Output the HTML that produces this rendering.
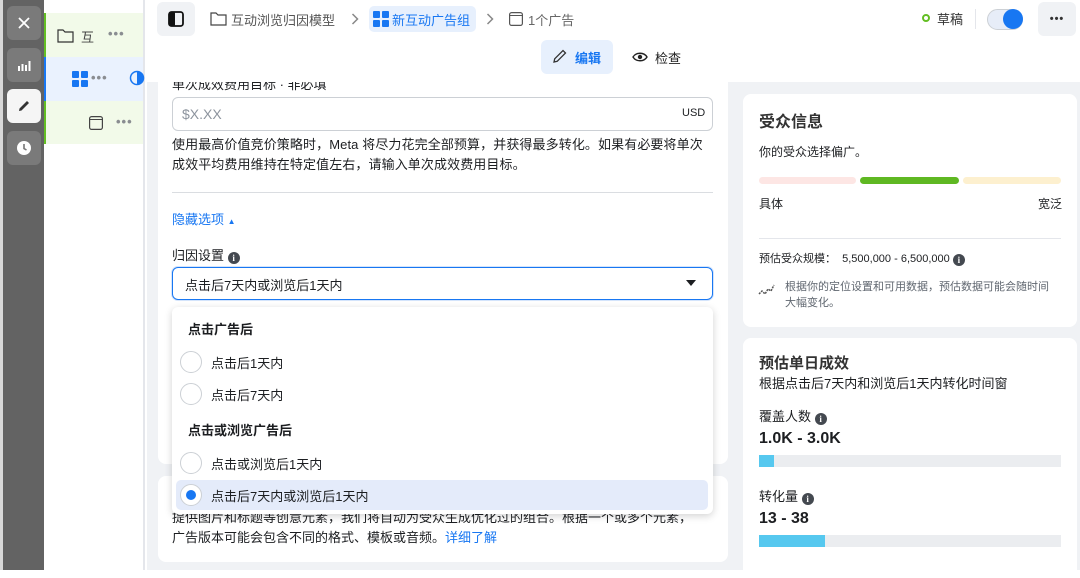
<!DOCTYPE html>
<html><head><meta charset="utf-8"><style>
*{box-sizing:border-box;margin:0;padding:0}
body{width:1080px;height:570px;overflow:hidden;position:relative;background:#fff;font-family:"Liberation Sans","Noto Sans CJK SC",sans-serif;color:#1c1e21;font-size:13px}
.a{position:absolute}
.rail{left:0;top:0;width:44px;height:570px;background:#636363;border-left:3px solid #d8d8d8}
.rb{position:absolute;left:4px;width:34px;height:34px;border-radius:6px;background:#7a7a7a;display:flex;align-items:center;justify-content:center}
.tree{left:44px;top:0;width:101px;height:570px;background:#fff;border-right:2px solid #e4e6eb}
.dots{color:#8a8d91;font-size:13px;letter-spacing:1px;font-weight:bold}
.main{left:147px;top:0;width:933px;height:570px;background:#f0f2f5}
.hdr{left:147px;top:0;width:933px;height:82px;background:#fff}
.card{background:#fff;border-radius:8px}
.radio{position:absolute;left:6px;width:22px;height:22px;border-radius:50%;border:1px solid #ccd0d5;background:#fff}
.info{display:inline-block;width:12px;height:12px;border-radius:50%;background:#444950;color:#fff;font-size:9px;font-weight:bold;text-align:center;line-height:12px;vertical-align:-1px;font-family:"Liberation Serif",serif}
.chev{color:#888;font-size:20px;line-height:20px}
</style></head><body>
<div class="a rail">
 <div class="rb" style="top:6px"><svg width="14" height="14"><path d="M2 2L12 12M12 2L2 12" stroke="#fff" stroke-width="1.8"/></svg></div>
 <div class="rb" style="top:48px"><svg width="16" height="14"><rect x="2" y="8" width="2" height="5" fill="#fff"/><rect x="5.5" y="6" width="2" height="7" fill="#fff"/><rect x="9" y="7" width="2" height="6" fill="#fff"/><rect x="12.5" y="3" width="2" height="10" fill="#fff"/></svg></div>
 <div class="rb" style="top:89px;background:#f5f5f5"><svg width="16" height="16"><path d="M3 13L3.5 10.5L11 3L13 5L5.5 12.5Z" fill="#333"/></svg></div>
 <div class="rb" style="top:131px"><svg width="16" height="16"><circle cx="8" cy="8" r="7" fill="#fff"/><path d="M8 4V8.5L10.5 10" stroke="#777" stroke-width="1.6" fill="none"/></svg></div>
</div>
<div class="a tree">
 <div class="a" style="left:0;top:13px;width:99px;height:44px;background:#f2fae9;border-left:2px solid #63be23"></div>
 <div class="a" style="left:0;top:57px;width:99px;height:44px;background:#eaf2fe;border-left:2px solid #1877f2"></div>
 <div class="a" style="left:0;top:101px;width:99px;height:43px;background:#f2fae9;border-left:2px solid #63be23"></div>
 <svg class="a" style="left:13px;top:28px" width="17" height="15"><path d="M1 2H6L8 4H16V14H1Z" fill="none" stroke="#333" stroke-width="1.2"/></svg>
 <div class="a" style="left:37px;top:27px;color:#444;font-size:13px">互</div>
 <div class="a dots" style="left:64px;top:26px">•••</div>
 <svg class="a" style="left:28px;top:71px" width="16" height="16"><rect x="0" y="0" width="7" height="7" rx="1" fill="#1877f2"/><rect x="9" y="0" width="7" height="7" rx="1" fill="#1877f2"/><rect x="0" y="9" width="7" height="7" rx="1" fill="#1877f2"/><rect x="9" y="9" width="7" height="7" rx="1" fill="#1877f2"/></svg>
 <div class="a dots" style="left:47px;top:70px">•••</div>
 <svg class="a" style="left:85px;top:70px" width="16" height="16"><circle cx="8" cy="8" r="6.5" fill="none" stroke="#1877f2" stroke-width="1.5"/><path d="M8 1.5A6.5 6.5 0 0 1 8 14.5Z" fill="#1877f2"/></svg>
 <svg class="a" style="left:45px;top:116px" width="14" height="14"><rect x="0.6" y="0.6" width="12.8" height="12.8" rx="2" fill="none" stroke="#444" stroke-width="1.2"/><path d="M1 3.5H13" stroke="#444"/></svg>
 <div class="a dots" style="left:72px;top:114px">•••</div>
</div>
<div class="a main"></div>
<div class="a card" style="left:158px;top:60px;width:570px;height:404px"></div>
<div class="a" style="left:172px;top:74px;color:#1c1e21;font-size:13px">单次成效费用目标 · 非必填</div>
<div class="a" style="left:172px;top:97px;width:541px;height:34px;border:1px solid #ccd0d5;border-radius:6px"></div>
<div class="a" style="left:182px;top:106px;color:#8d949e;font-size:14px">$X.XX</div>
<div class="a" style="left:682px;top:107px;color:#1c1e21;font-size:11px">USD</div>
<div class="a" style="left:172px;top:135px;width:545px;line-height:20px;font-size:13px;color:#1c1e21;letter-spacing:0.1px">使用最高价值竞价策略时，Meta 将尽力花完全部预算，并获得最多转化。如果有必要将单次<br>成效平均费用维持在特定值左右，请输入单次成效费用目标。</div>
<div class="a" style="left:172px;top:192px;width:541px;height:1px;background:#dadde1"></div>
<div class="a" style="left:172px;top:209px;color:#1877f2;font-size:13px">隐藏选项 <span style="font-size:8px">▲</span></div>
<div class="a" style="left:172px;top:245px;font-size:13px">归因设置 <span class="info">i</span></div>
<div class="a" style="left:172px;top:267px;width:541px;height:33px;border:1px solid #1877f2;border-radius:6px;box-shadow:0 0 0 1px #d4e4fb"></div>
<div class="a" style="left:185px;top:275px;font-size:13px">点击后7天内或浏览后1天内</div>
<svg class="a" style="left:686px;top:280px" width="10" height="6"><path d="M0 0H10L5 6Z" fill="#1c1e21"/></svg>
<div class="a card" style="left:158px;top:476px;width:570px;height:86px"></div>
<div class="a" style="left:172px;top:508px;width:545px;line-height:20px;font-size:13px;color:#1c1e21">提供图片和标题等创意元素，我们将自动为受众生成优化过的组合。根据一个或多个元素，<br>广告版本可能会包含不同的格式、模板或音频。<span style="color:#1877f2">详细了解</span></div>
<div class="a" style="left:172px;top:307px;width:541px;height:207px;background:#fff;border-radius:6px;box-shadow:0 2px 8px rgba(0,0,0,.18)">
 <div class="a" style="left:16px;top:12px;font-weight:bold;font-size:13px">点击广告后</div>
 <div class="radio" style="top:44px;left:8px"></div><div class="a" style="left:39px;top:46px">点击后1天内</div>
 <div class="radio" style="top:76px;left:8px"></div><div class="a" style="left:39px;top:78px">点击后7天内</div>
 <div class="a" style="left:16px;top:113px;font-weight:bold;font-size:13px">点击或浏览广告后</div>
 <div class="radio" style="top:145px;left:8px"></div><div class="a" style="left:39px;top:147px">点击或浏览后1天内</div>
 <div class="a" style="left:4px;top:173px;width:532px;height:30px;background:#e4ebfa;border-radius:5px"></div>
 <div class="radio" style="top:177px;left:8px"></div><div class="a" style="left:14px;top:183px;width:10px;height:10px;border-radius:50%;background:#1877f2"></div>
 <div class="a" style="left:39px;top:179px">点击后7天内或浏览后1天内</div>
</div>
<div class="a card" style="left:743px;top:94px;width:334px;height:233px"></div>
<div class="a" style="left:759px;top:108px;font-size:16px;font-weight:bold;color:#333">受众信息</div>
<div class="a" style="left:759px;top:143px;font-size:12px">你的受众选择偏广。</div>
<div class="a" style="left:759px;top:177px;width:97px;height:7px;border-radius:4px;background:#fde6e4"></div>
<div class="a" style="left:860px;top:177px;width:99px;height:7px;border-radius:4px;background:#5fb822"></div>
<div class="a" style="left:963px;top:177px;width:98px;height:7px;border-radius:4px;background:#fdf0cf"></div>
<div class="a" style="left:759px;top:195px;font-size:12px">具体</div>
<div class="a" style="left:1038px;top:195px;font-size:12px">宽泛</div>
<div class="a" style="left:759px;top:238px;width:302px;height:1px;background:#e4e6eb"></div>
<div class="a" style="left:759px;top:250px;font-size:11px">预估受众规模：&nbsp; 5,500,000 - 6,500,000 <span class="info">i</span></div>
<svg class="a" style="left:758px;top:282px" width="18" height="16"><path d="M1 12L4 9L7 12L10 7L13 9L16 3" fill="none" stroke="#555" stroke-width="1.5" stroke-dasharray="2 1"/></svg>
<div class="a" style="left:785px;top:279px;width:285px;line-height:16px;font-size:11px;color:#606770">根据你的定位设置和可用数据，预估数据可能会随时间<br>大幅变化。</div>
<div class="a card" style="left:743px;top:338px;width:334px;height:240px"></div>
<div class="a" style="left:759px;top:352px;font-size:15px;font-weight:bold;color:#333">预估单日成效</div>
<div class="a" style="left:759px;top:373px;font-size:13px">根据点击后7天内和浏览后1天内转化时间窗</div>
<div class="a" style="left:759px;top:406px;font-size:13px">覆盖人数 <span class="info">i</span></div>
<div class="a" style="left:759px;top:430px;font-size:16px;font-weight:bold">1.0K - 3.0K</div>
<div class="a" style="left:759px;top:455px;width:302px;height:12px;background:#ebedf0"><div style="width:15px;height:12px;background:#56c8ef"></div></div>
<div class="a" style="left:759px;top:486px;font-size:13px">转化量 <span class="info">i</span></div>
<div class="a" style="left:759px;top:510px;font-size:16px;font-weight:bold">13 - 38</div>
<div class="a" style="left:759px;top:535px;width:302px;height:12px;background:#ebedf0"><div style="width:66px;height:12px;background:#56c8ef"></div></div>
<div class="a hdr"></div>
<div class="a" style="left:157px;top:2px;width:38px;height:34px;border-radius:6px;background:#f0f2f5"></div>
<svg class="a" style="left:168px;top:11px" width="16" height="16"><rect x="1" y="1" width="14" height="14" rx="2.5" fill="none" stroke="#111" stroke-width="1.8"/><rect x="1" y="1" width="6" height="14" rx="1.5" fill="#111"/></svg>
<svg class="a" style="left:210px;top:11px" width="17" height="15"><path d="M1 2H6L8 4H16V14H1Z" fill="none" stroke="#444" stroke-width="1.2"/></svg>
<div class="a" style="left:231px;top:10px;font-size:13px;color:#555">互动浏览归因模型</div>
<svg class="a" style="left:351px;top:13px" width="8" height="12"><path d="M1.5 1L6.5 6L1.5 11" fill="none" stroke="#888" stroke-width="1.5"/></svg>
<div class="a" style="left:369px;top:6px;width:107px;height:26px;border-radius:5px;background:#e7f0fd"></div>
<svg class="a" style="left:373px;top:11px" width="16" height="16"><rect x="0" y="0" width="7" height="7" rx="1" fill="#1877f2"/><rect x="9" y="0" width="7" height="7" rx="1" fill="#1877f2"/><rect x="0" y="9" width="7" height="7" rx="1" fill="#1877f2"/><rect x="9" y="9" width="7" height="7" rx="1" fill="#1877f2"/></svg>
<div class="a" style="left:392px;top:10px;font-size:13px;color:#1877f2">新互动广告组</div>
<svg class="a" style="left:486px;top:13px" width="8" height="12"><path d="M1.5 1L6.5 6L1.5 11" fill="none" stroke="#888" stroke-width="1.5"/></svg>
<svg class="a" style="left:509px;top:12px" width="14" height="14"><rect x="0.6" y="0.6" width="12.8" height="12.8" rx="2" fill="none" stroke="#555" stroke-width="1.2"/><path d="M1 3.5H13" stroke="#555"/></svg>
<div class="a" style="left:528px;top:10px;font-size:13px;color:#666">1个广告</div>
<div class="a" style="left:541px;top:40px;width:72px;height:34px;border-radius:6px;background:#e7f0fd"></div>
<svg class="a" style="left:552px;top:48px" width="16" height="16"><path d="M2 14L2.7 10.8L11 2.5L13.5 5L5.2 13.3Z" fill="none" stroke="#333" stroke-width="1.3"/></svg>
<div class="a" style="left:575px;top:48px;font-size:13px;font-weight:bold;color:#1877f2">编辑</div>
<svg class="a" style="left:632px;top:51px" width="16" height="12"><path d="M1 6C4 1 12 1 15 6C12 11 4 11 1 6Z" fill="none" stroke="#222" stroke-width="1.4"/><circle cx="8" cy="6" r="2.2" fill="#222"/></svg>
<div class="a" style="left:655px;top:48px;font-size:13px;color:#222">检查</div>
<div class="a" style="left:922px;top:14px;width:8px;height:8px;border-radius:50%;border:2px solid #63be23"></div>
<div class="a" style="left:937px;top:9px;font-size:13px;color:#333">草稿</div>
<div class="a" style="left:975px;top:9px;width:1px;height:20px;background:#e4e6eb"></div>
<div class="a" style="left:987px;top:9px;width:36px;height:21px;border-radius:11px;background:#e7edf8;border:1px solid #ccd0d5"></div>
<div class="a" style="left:1003px;top:9px;width:20px;height:20px;border-radius:50%;background:#1877f2"></div>
<div class="a" style="left:1038px;top:2px;width:38px;height:34px;border-radius:6px;background:#f0f2f5;text-align:center;line-height:34px;font-weight:bold;font-size:11px;color:#333;letter-spacing:1px">•••</div>
</body></html>
